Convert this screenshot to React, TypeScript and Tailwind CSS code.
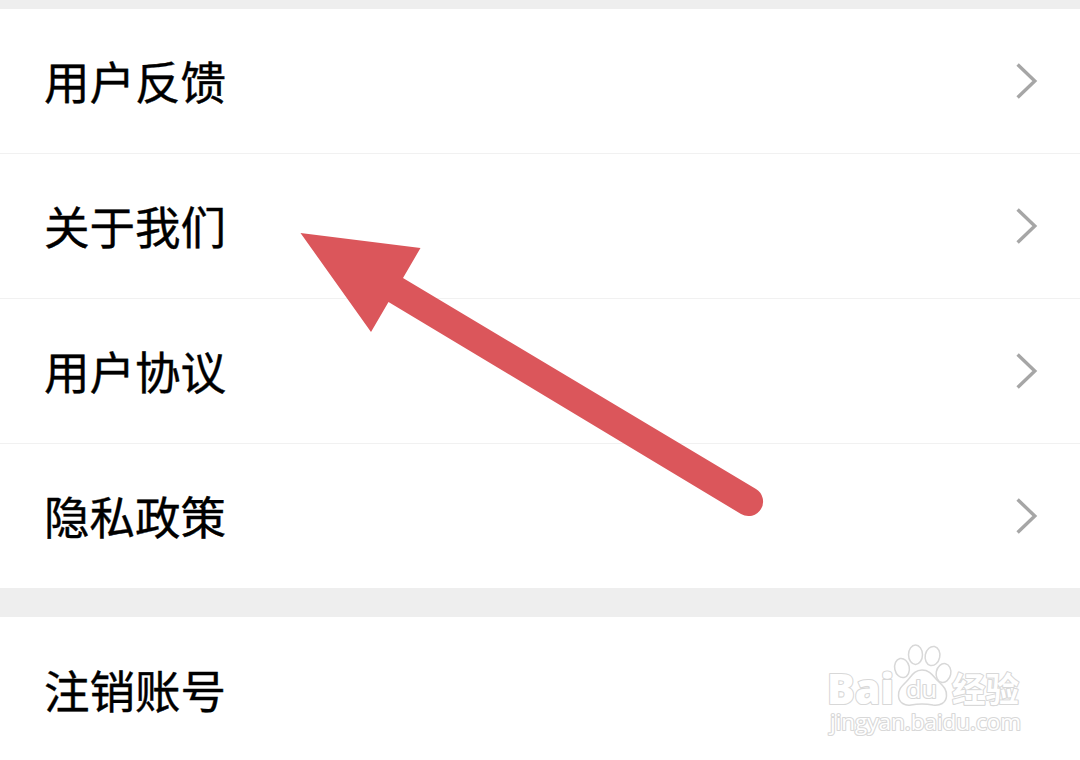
const items = ["用户反馈", "关于我们", "用户协议", "隐私政策"];

function Chevron() {
  return (
    <svg className="h-9 w-6" viewBox="0 0 24 36" fill="none" stroke="#a6a6a6" strokeWidth="3.4">
      <path d="M3.6 1.5 L20.8 18 L3.6 34.5"/>
    </svg>
  );
}

function Row( { label, arrow = true }: { label: string; arrow?: boolean } ) {
  return (
    <div className="flex h-full items-center justify-between pr-[42px] pl-11">
      <span className="text-[45.5px] leading-none whitespace-nowrap text-black [-webkit-text-stroke:0.4px_black]">
        { label }
      </span>
      { arrow && <Chevron/> }
    </div>
  );
}

function Pointer() {
  return (
    <svg className="absolute top-0 left-0" width="1080" height="760" viewBox="0 0 1080 760">
      <path d="M300.5 233 L420.5 248 L403 278 L756 489 A14 14 0 0 1 741 514 L388.5 302 L371 332 Z" fill="#db565b"/>
    </svg>
  );
}

function Watermark() {
  return (
    <svg className="absolute top-[640px] left-[820px]" width="210" height="104" viewBox="820 640 210 104">
      <g fill="#fff" stroke="#d8d8d8" strokeWidth="1.5">
        <ellipse cx="915.5" cy="654.7" rx="7" ry="9.7"/>
        <ellipse cx="932.5" cy="656" rx="7.3" ry="9.7" transform="rotate(12 932.5 656)"/>
        <ellipse cx="902" cy="668" rx="7.3" ry="9.7" transform="rotate(-12 902 668)"/>
        <ellipse cx="943.5" cy="673" rx="7.3" ry="9.5" transform="rotate(12 943.5 673)"/>
        <path d="M922 670 C914 670 911 677 906 682 C901 687 898 690 898.5 696 C899 703 905 706 911 705 Q922 703 933 705 C940 706 946 703 946.5 696 C947 689 943 686 938 681 C933 676 930 670 922 670 Z"/>
      </g>
      <g fill="#fff" stroke="#d8d8d8" strokeWidth="2.2" strokeLinejoin="round" paintOrder="stroke" fontFamily="Open Sans, Noto Sans CJK SC, sans-serif">
        <text x="827" y="704" fontSize="42" fontWeight="800" textLength="67" lengthAdjust="spacingAndGlyphs">Bai</text>
        <text x="906" y="698" fontSize="23" fontWeight="500" textLength="31" lengthAdjust="spacingAndGlyphs">du</text>
        <text x="952" y="701.5" fontSize="34" fontWeight="700" textLength="67" lengthAdjust="spacingAndGlyphs">经验</text>
        <text x="830" y="730" fontSize="21.5" fontWeight="500" textLength="191" lengthAdjust="spacingAndGlyphs">jingyan.baidu.com</text>
      </g>
    </svg>
  );
}

export default function App() {
  return (
    <div className="relative flex h-[760px] w-[1080px] flex-col overflow-hidden bg-white font-['Noto_Sans_CJK_SC',sans-serif]">
      <div className="h-[9px] shrink-0 bg-[#eee]"/>
      <div className="flex h-[579px] shrink-0 flex-col divide-y divide-[#f1f1f1]">
        { items.map( ( label ) => (
          <div key={ label } className="flex-1">
            <Row label={ label }/>
          </div>
        ) ) }
      </div>
      <div className="h-[29px] shrink-0 bg-[#eee]"/>
      <div className="h-[145px] shrink-0">
        <Row label="注销账号" arrow={ false }/>
      </div>
      <Pointer/>
      <Watermark/>
    </div>
  );
}
